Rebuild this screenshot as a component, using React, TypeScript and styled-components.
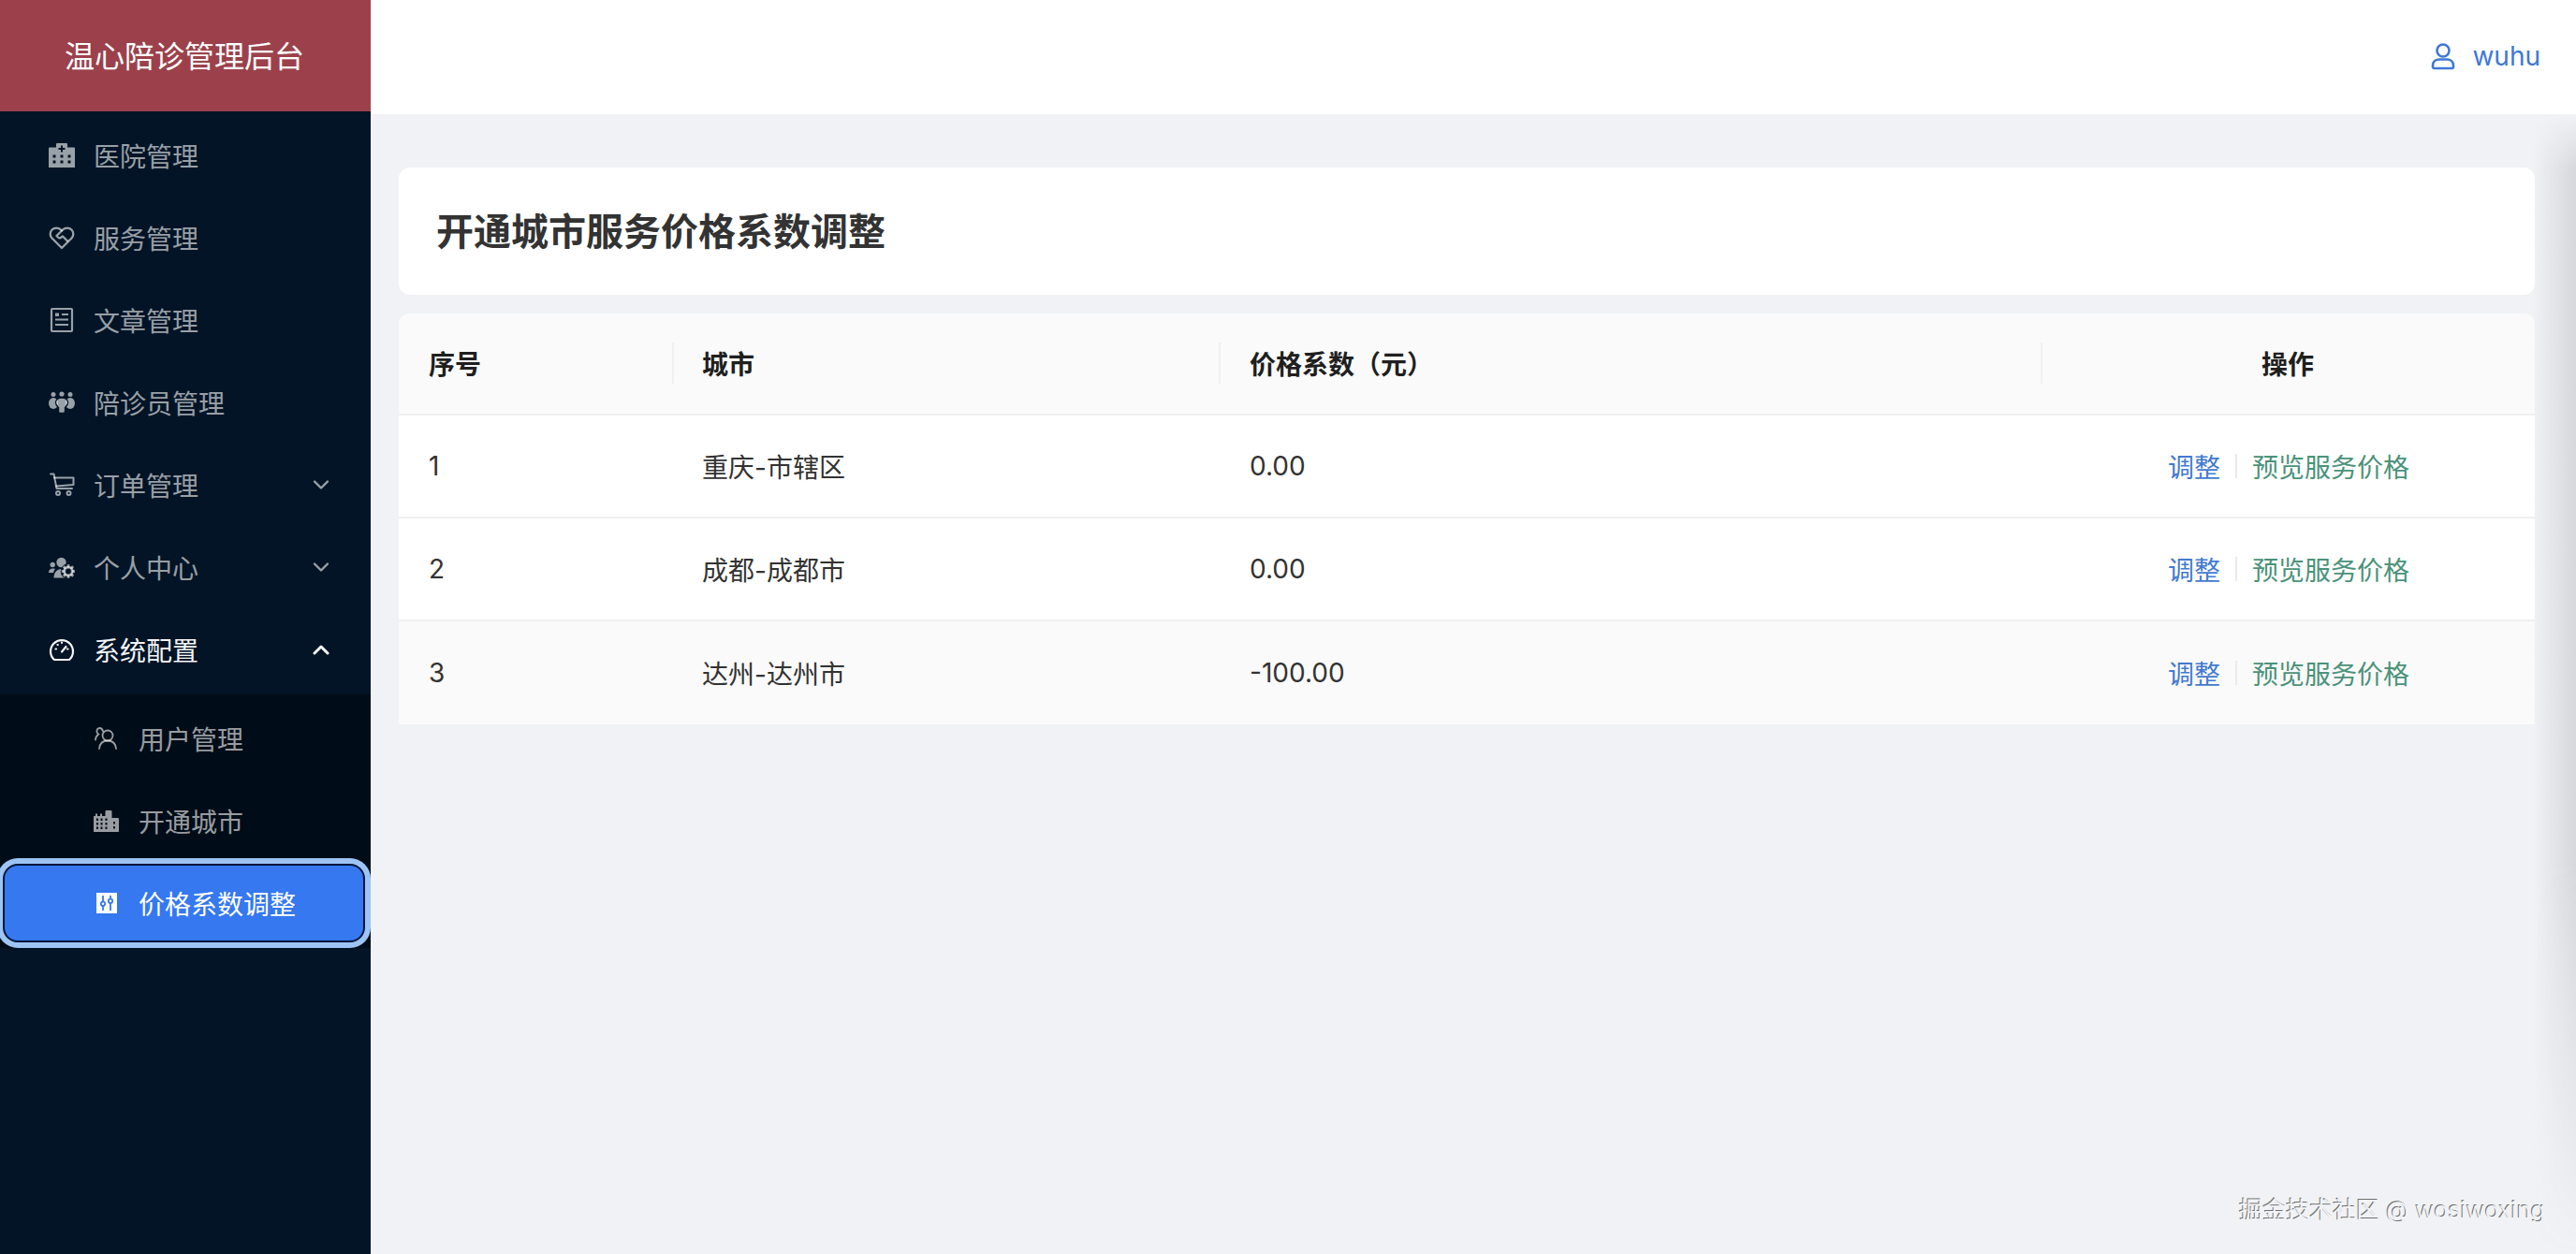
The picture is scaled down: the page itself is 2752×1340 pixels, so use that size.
import React from 'react';
import styled, { createGlobalStyle } from 'styled-components';

const SIDER_BG = '#021426';

const Global = createGlobalStyle`
  html, body { margin: 0; padding: 0; height: 100%; }
  body { font-family: Inter, "Noto Sans CJK SC", sans-serif; background: #f0f2f5; overflow: hidden; }
  * { box-sizing: border-box; }
`;

const Page = styled.div`
  position: relative;
  display: flex;
  width: 2752px;
  height: 1340px;
  overflow: hidden;
`;
const Sider = styled.aside`
  flex: 0 0 396px;
  background: ${SIDER_BG};
  display: flex;
  flex-direction: column;
`;
const Logo = styled.div`
  height: 119px;
  background: #9c414b;
  color: #fff;
  font-size: 32px;
  padding: 0 2px 4px 0;
  display: flex;
  align-items: center;
  justify-content: center;
`;
const Menu = styled.nav`
  padding-top: 3px;
  display: flex;
  flex-direction: column;
`;
const Item = styled.div<{ $active?: boolean }>`
  height: 80px;
  margin: 4px 0;
  padding: 0 44px 0 52px;
  display: flex;
  align-items: center;
  font-size: 28px;
  color: ${p => (p.$active ? '#f4f6f8' : 'rgba(255,255,255,0.6)')};
  svg.icon { flex: 0 0 28px; width: 28px; height: 28px; margin-right: 20px; }
`;
const Label = styled.span`
  flex: 1;
`;
const SubMenu = styled.div`
  background: #000c17;
  margin-top: 4px;
  padding: 3px 0 0;
  display: flex;
  flex-direction: column;
`;
const SubItem = styled.div`
  height: 80px;
  margin: 4px 0;
  padding-left: 100px;
  display: flex;
  align-items: center;
  font-size: 28px;
  color: rgba(255,255,255,0.6);
  svg.icon { flex: 0 0 28px; width: 28px; height: 28px; margin-right: 20px; }
`;
const SelectedItem = styled(SubItem)`
  height: 84px;
  margin: 2px 6px 6px 3px;
  padding-left: 95px;
  color: #fff;
  background: #3578f0;
  border-radius: 16px;
  border: 2px solid #02163a;
  box-shadow: 0 0 0 6px #9dc4f5;
`;
const Main = styled.main`
  flex: 1;
  display: flex;
  flex-direction: column;
  min-width: 0;
`;
const Header = styled.header`
  height: 122px;
  background: #fff;
  padding: 0 38px 3px 0;
  display: flex;
  align-items: center;
  justify-content: flex-end;
  color: #3e78d6;
  font-size: 28px;
  svg { width: 28px; height: 30px; margin-right: 17px; }
`;
const Content = styled.div`
  flex: 1;
  padding: 57px 44px 0 30px;
  display: flex;
  flex-direction: column;
  gap: 20px;
`;
const TitleCard = styled.div`
  height: 136px;
  background: #fff;
  border-radius: 12px;
  padding: 0 0 5px 40px;
  display: flex;
  align-items: center;
  font-size: 40px;
  font-weight: 600;
  color: #333;
`;
const Table = styled.div`
  border-radius: 12px 12px 0 0;
  overflow: hidden;
  background: #fff;
`;
const Row = styled.div<{ $head?: boolean; $tint?: boolean }>`
  display: grid;
  grid-template-columns: 292px 584px 878px 1fr;
  height: ${p => (p.$head ? 109 : 110)}px;
  padding-bottom: ${p => (p.$head ? 2 : 0)}px;
  align-items: center;
  font-size: 28px;
  color: ${p => (p.$head ? '#1f1f1f' : '#333')};
  font-weight: ${p => (p.$head ? 600 : 400)};
  background: ${p => (p.$head || p.$tint ? '#fafafa' : '#fff')};
  border-bottom: 2px solid #f0f0f0;
  &:last-child { border-bottom: 0; }
`;
const Cell = styled.div<{ $sep?: boolean; $center?: boolean }>`
  position: relative;
  padding-left: 32px;
  &:nth-child(3) { padding-left: 33px; }
  ${p => p.$center && 'padding-left: 0; text-align: center;'}
  &::before {
    ${p => (p.$sep ? "content: '';" : '')}
    position: absolute;
    left: 0;
    top: 50%;
    margin-top: -22px;
    width: 2px;
    height: 44px;
    background: #f0f0f0;
  }
`;
const Actions = styled.div`
  display: flex;
  align-items: center;
  justify-content: center;
  padding-left: 2px;
`;
const LinkText = styled.span<{ $green?: boolean }>`
  color: ${p => (p.$green ? '#4a9279' : '#4279cf')};
`;
const Divider = styled.span`
  width: 2px;
  height: 26px;
  background: #eaeaea;
  margin: 0 16px;
`;
const Watermark = styled.div`
  position: absolute;
  right: 33px;
  bottom: 31px;
  font-size: 25px;
  color: #f2f3f5;
  text-shadow: -1px -1px 0 #6e6e6e;
`;
const EdgeShadow = styled.div`
  position: absolute;
  top: 122px;
  right: 0;
  width: 46px;
  bottom: 0;
  pointer-events: none;
  background: linear-gradient(to right, rgba(120,124,130,0), rgba(120,124,130,0.22));
  mask-image: linear-gradient(to bottom, transparent 0, #000 60px, #000 800px, transparent 1218px);
`;

const Hospital = () => (
  <svg className="icon" viewBox="0 0 28 28" fill="currentColor">
    <path fillRule="evenodd" d="M9 1h10a1 1 0 0 1 1 1v3.500h7a1 1 0 0 1 1 1V27H0V6.500a1 1 0 0 1 1-1h7V2a1 1 0 0 1 1-1zM13 3.500V6h-2.500v2H13v2.500h2V8h2.500V6H15V3.500zM4.500 13.500v3h3v-3zM12.500 13.500v3h3v-3zM20.500 13.500v3h3v-3zM4.500 19.500v3h3v-3zM12.500 19.500v3h3v-3zM20.500 19.500v3h3v-3z" />
  </svg>
);
const HeartShake = () => (
  <svg className="icon" viewBox="0 0 28 28" fill="none" stroke="currentColor" strokeWidth="2.300" strokeLinejoin="round" strokeLinecap="round">
    <path d="M14 25 3.500 14.500a6.500 6.500 0 0 1 0-9 6.700 6.700 0 0 1 9.500 0l1 1 1-1a6.700 6.700 0 0 1 9.500 0 6.500 6.500 0 0 1 0 9z" />
    <path d="M14 6.500 8.500 12l1.500 1.500a2.500 2.500 0 0 0 3.500 0l1.500-1 5 5" />
  </svg>
);
const News = () => (
  <svg className="icon" viewBox="0 0 28 28" fill="none" stroke="currentColor" strokeWidth="2.200">
    <rect x="3" y="2" width="22" height="24" rx="1" />
    <path d="M14 8h7M7 13.500h14M7 19h14" />
    <rect x="7" y="6.500" width="4" height="3.500" fill="currentColor" stroke="none" />
  </svg>
);
const Group = () => (
  <svg className="icon" viewBox="0 0 28 28" fill="currentColor">
    <circle cx="5" cy="5.500" r="2.500" /><circle cx="14" cy="5" r="2.600" /><circle cx="23" cy="5.500" r="2.500" />
    <ellipse cx="5" cy="15" rx="5" ry="6" /><ellipse cx="23" cy="15" rx="5" ry="6" />
    <path stroke={SIDER_BG} strokeWidth="1.400" d="M14 9c4 0 6.500 2.200 6.500 5.200 0 2.300-1.600 3.800-3 5.300v4.200c0 1-.8 1.800-1.800 1.800h-3.400c-1 0-1.800-.8-1.800-1.800v-4.200c-1.400-1.500-3-3-3-5.300C7.500 11.200 10 9 14 9z" />
  </svg>
);
const Cart = () => (
  <svg className="icon" viewBox="0 0 28 28" fill="none" stroke="currentColor" strokeWidth="2" strokeLinejoin="round" strokeLinecap="round">
    <path d="M2 2.500h3.500L8.500 18H25" />
    <path d="M6 6.500h20.500V14L8 15.500" />
    <circle cx="10" cy="23" r="2" /><circle cx="21.500" cy="23" r="2" />
  </svg>
);
const UserCog = () => (
  <svg className="icon" viewBox="0 0 28 28" fill="currentColor">
    <circle cx="4.200" cy="11.500" r="2.700" /><circle cx="13.500" cy="9" r="5.200" />
    <path d="M0 20c0-3 1.500-4.500 4.500-4.500 1 0 1.800.1 2.500.5-1.200 1.200-1.700 2.500-1.900 4z" />
    <path d="M5.500 25.500c0-5 2.500-9.500 8.500-9.500s8 4 8 9.500z" />
    <circle cx="21" cy="18.500" r="8.300" fill={SIDER_BG} />
    <g transform="translate(21 18.500)">
      {[0, 45, 90, 135, 180, 225, 270, 315].map(a => (
        <rect key={a} x="-1.400" y="-7.300" width="2.800" height="3.500" transform={`rotate(${a})`} />
      ))}
      <circle r="4.300" fill="none" stroke="currentColor" strokeWidth="2.800" />
    </g>
  </svg>
);
const Gauge = () => (
  <svg className="icon" viewBox="0 0 28 28" fill="none" stroke="currentColor" strokeWidth="2.200" strokeLinecap="round">
    <path d="M6 25h16a12 12 0 1 0-16 0z" strokeLinejoin="round" />
    <path d="M14 16.500 18.500 11" />
    <path d="M14 6.500v.5M7.500 13.500h.5M9.500 9h.3M20 13.500h.5" />
  </svg>
);
const People = () => (
  <svg className="icon" viewBox="0 0 28 28" fill="none" stroke="currentColor" strokeWidth="1.800" strokeLinecap="round">
    <circle cx="15" cy="11" r="5.500" />
    <path d="M6 25c.5-5 3.500-8.500 9-8.500s8.500 3.500 9 8.500" />
    <path d="M10 6.500C9.500 4.500 8.500 3 6.500 3 4.500 3 3 4.800 3.500 7c.2 1 .8 2 1.700 2.500C3.500 11 2 13 2 15.500" />
  </svg>
);
const City = () => (
  <svg className="icon" viewBox="0 0 28 28" fill="currentColor">
    <path fillRule="evenodd" d="M2 6.500h2V9h3V6.500h2V9h3.500V4a1 1 0 0 1 1-1h5a1 1 0 0 1 1 1v7H26a1 1 0 0 1 1 1v14H0V9h2zM3 11.500V14h2v-2.500zM7.500 11.500V14h2v-2.500zM12.500 11.500V14h2v-2.500zM3 16V18.500h2V16zM7.500 16V18.500h2V16zM12.500 16V18.500h2V16zM3 20.500V23h2v-2.500zM7.500 20.500V23h2v-2.500zM12.500 20.500V23h2v-2.500zM21 15V17.500h2V15zM21 20V22.500h2V20z" />
  </svg>
);
const Sliders = () => (
  <svg className="icon" viewBox="0 0 28 28">
    <rect x="3" y="3" width="22" height="22" fill="#fff" />
    <g fill="none" stroke="#3578f0" strokeWidth="1.800">
      <path d="M10 6v6.500M10 17v5M18 6v3.500M18 14v8" />
      <circle cx="10" cy="14.800" r="2.200" />
      <circle cx="18" cy="11.800" r="2.200" />
    </g>
  </svg>
);
const Chevron = ({ up }: { up?: boolean }) => (
  <svg width="18" height="12" viewBox="0 0 18 12" fill="none" stroke="currentColor" strokeWidth={up ? 3 : 2.400} strokeLinecap="round" strokeLinejoin="round">
    <path d={up ? 'M2 10 9 3l7 7' : 'M2 2.500l7 7 7-7'} />
  </svg>
);

const rows = [
  { id: 1, city: '重庆-市辖区', k: '0.00' },
  { id: 2, city: '成都-成都市', k: '0.00' },
  { id: 3, city: '达州-达州市', k: '-100.00', tint: true },
];

export default function App() {
  return (
    <Page>
      <Global />
      <Sider>
        <Logo>温心陪诊管理后台</Logo>
        <Menu>
          <Item><Hospital /><Label>医院管理</Label></Item>
          <Item><HeartShake /><Label>服务管理</Label></Item>
          <Item><News /><Label>文章管理</Label></Item>
          <Item><Group /><Label>陪诊员管理</Label></Item>
          <Item><Cart /><Label>订单管理</Label><Chevron /></Item>
          <Item><UserCog /><Label>个人中心</Label><Chevron /></Item>
          <Item $active><Gauge /><Label>系统配置</Label><Chevron up /></Item>
          <SubMenu>
            <SubItem><People />用户管理</SubItem>
            <SubItem><City />开通城市</SubItem>
            <SelectedItem><Sliders />价格系数调整</SelectedItem>
          </SubMenu>
        </Menu>
      </Sider>
      <Main>
        <Header>
          <svg viewBox="0 0 28 30" fill="none" stroke="currentColor" strokeWidth="2.600">
            <circle cx="14" cy="9" r="6.500" />
            <path d="M3 26.500v-1.500c0-4 3-6.500 7-6.500h8c4 0 7 2.500 7 6.500v1.500a1.500 1.500 0 0 1-1.500 1.500h-19A1.500 1.500 0 0 1 3 26.500z" />
          </svg>
          wuhu
        </Header>
        <Content>
          <TitleCard>开通城市服务价格系数调整</TitleCard>
          <Table>
            <Row $head>
              <Cell>序号</Cell>
              <Cell $sep>城市</Cell>
              <Cell $sep>价格系数（元）</Cell>
              <Cell $sep $center>操作</Cell>
            </Row>
            {rows.map(r => (
              <Row key={r.id} $tint={r.tint}>
                <Cell>{r.id}</Cell>
                <Cell>{r.city}</Cell>
                <Cell>{r.k}</Cell>
                <Actions>
                  <LinkText>调整</LinkText>
                  <Divider />
                  <LinkText $green>预览服务价格</LinkText>
                </Actions>
              </Row>
            ))}
          </Table>
        </Content>
      </Main>
      <EdgeShadow />
      <Watermark>掘金技术社区 @ wosiwoxing</Watermark>
    </Page>
  );
}
